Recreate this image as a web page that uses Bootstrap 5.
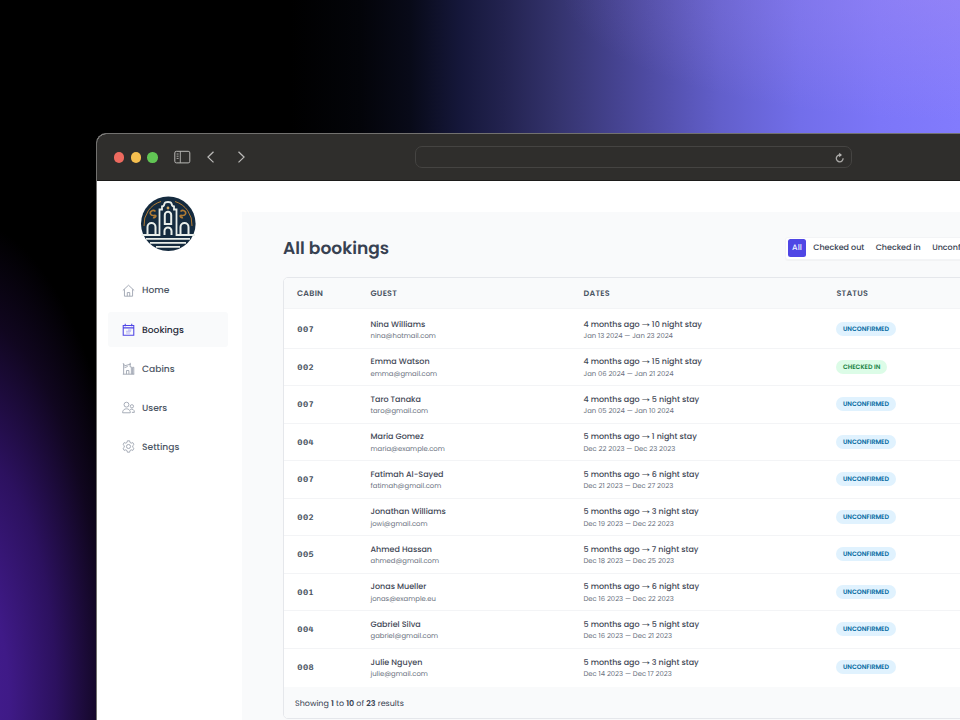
<!DOCTYPE html>
<html lang="en">
<head>
<meta charset="utf-8">
<meta name="viewport" content="width=device-width, initial-scale=1">
<title>All bookings</title>
<link href="https://cdn.jsdelivr.net/npm/bootstrap@5.3.0/dist/css/bootstrap.min.css" rel="stylesheet">
<style>
body{width:960px;height:720px;font-family:Poppins,Inter,"Liberation Sans",sans-serif;font-size:7.98px;line-height:1.5;color:#374151;text-rendering:geometricPrecision;
 padding:133px 0 0 96px;
 background:
 radial-gradient(ellipse 175px 480px at -35px 700px,#451d92 0%,#3f1a87 25%,#2c115f 52%,#10061f 80%,transparent 100%),
 radial-gradient(ellipse 400px 130px at 960px -10px,rgba(165,140,240,.45),transparent),
 linear-gradient(90deg,#000 0,#000 290px,#030409 360px,#080a18 410px,#15173a 460px,#232350 505px,#35346f 560px,#4c499e 640px,#625fcb 720px,#726eea 800px,#7c76f8 880px,#827bfd 960px)}
.win{width:900px;height:620px;border:1px solid #72716f;border-radius:10px 0 0 0}
.bar{height:47px;background:#2f2e2c;border-bottom:1px solid #1c1b1a;padding-left:17px}
.dot{width:10.4px;height:10.4px;border-radius:50%;margin:1px 6.3px 0 0}
.red{background:#ed6a5f}.amber{background:#f5bf4f}.green{background:#61c554}
.tools{margin-left:10px}
.url{width:437px;height:22px;border:1px solid #454442;border-radius:7px;padding-right:7px;margin-left:167px}
.side{width:145px;padding:15px 14px 0 11px}
.logo{margin-bottom:21px}
.side .nav-link{height:34.4px;margin-bottom:4.8px;padding:0 0 0 14px;color:#4b5563;font-size:9.15px;font-weight:500;border-radius:3px;gap:7px}
.side .nav-link span{padding-top:2.2px}
.side .nav-link.active{background:#f9fafb;color:#1f2937}
.ico{width:13px;height:13px;fill:none;stroke:#9ca3af;stroke-width:1.1}
.active .ico{stroke:#4f46e5}
.pane{background:#f9fafb;margin-top:31px;padding:24px 0 0 41px;overflow:hidden}
.head{width:773px}
h1{font-size:17.1px;font-weight:600;color:#374151;line-height:24px}
.filters{width:271.5px;height:23px;background:#fff;border:1px solid #f3f4f6;border-radius:3px;box-shadow:0 1px 1px rgba(0,0,0,.03);padding:2px;font-weight:500;gap:2.2px}
.filters span{white-space:nowrap;padding:.8px 4.6px 0;line-height:16.7px;border-radius:2.5px}
.filters .on{background:#4f46e5;color:#eef2ff}
.tbl{width:760px;border:1px solid #e5e7eb;border-radius:5px;margin-top:17px;background:#fff;overflow:hidden}
.line{display:grid;grid-template-columns:73.5px 213px 253px 150px;padding-left:13px;align-items:center;height:37.5px;border-bottom:1px solid #f3f4f6}
.line:last-child{border-bottom:0}
.thd{height:31px;background:#f9fafb;font-weight:600;color:#4b5563;letter-spacing:.23px;padding-top:1.2px}
.tbody2{padding:2px 0 1px}
.cab{font:600 9.15px Sono,"Liberation Mono",monospace;color:#4b5563;padding-top:1.4px}
.who{font-weight:500;line-height:12.6px;padding-top:2.3px;color:#3f4856}
.arr{font-family:"Noto Sans Math","DejaVu Sans",sans-serif;font-size:8px;line-height:1}
.sub2{color:#6b7280;font-size:6.85px;line-height:11px}
.pill{display:block;width:max-content;font-size:6.3px;font-weight:600;line-height:13px;padding:1px 6.9px 0;border-radius:50px;margin:0 0 0 -.5px}
.un{background:#e0f2fe;color:#0369a1}.ci{background:#dcfce7;color:#15803d}
.foot{height:31px;background:#f9fafb;padding:2px 0 0 11px}
.foot b{font-weight:600}
</style>
<script src="https://cdn.jsdelivr.net/npm/bootstrap@5.3.0/dist/js/bootstrap.bundle.min.js"></script>
</head>
<body class="overflow-hidden">
<div class="win overflow-hidden bg-white">
 <header class="bar d-flex align-items-center">
  <i class="dot red"></i><i class="dot amber"></i><i class="dot green"></i>
  <svg class="tools" width="74" height="16" viewBox="0 0 74 16" fill="none" stroke="#b9b8b6"><rect x=".8" y="2.3" width="15" height="11.6" rx="1.6"/><path d="M6.3 2.3v11.6M2.6 5h2M2.6 7.2h2M2.6 9.4h2" stroke-width=".9"/><path d="M39.500 2.800 34 8.100l5.500 5.300M64.500 2.800l5.500 5.300-5.500 5.300" stroke-width="1.300"/></svg>
  <div class="url d-flex align-items-center justify-content-end"><svg width="9" height="11" viewBox="0 0 9 11" fill="none" stroke="#a9a8a6" stroke-width="1.300"><path d="M4.800 3a3.400 3.400 0 1 0 3.300 3.300"/><path d="M4.200.700v4.500L7 3z" fill="#b9b8b6" stroke="none"/></svg></div>
 </header>
 <div class="d-flex h-100">
  <aside class="side flex-shrink-0">
   <div class="logo"><svg width="56" height="56" viewBox="0 0 56 56" class="d-block mx-auto"><circle cx="28.300" cy="27.700" r="27.300" fill="#152b3f"/><g fill="none" stroke="#b27c35" stroke-width="1"><path d="M4 30a24 24 0 0 1 17-24.500M35 5.500A24 24 0 0 1 52 30"/><path d="M15.500 15.500c-2.500-2.500-6 0-5 2.500s4 1 5 1.500-.5 3-2.500 2M40.500 15.500c2.500-2.500 6 0 5 2.500s-4 1-5 1.500.5 3 2.500 2" stroke-width="1.600"/></g><g fill="none" stroke="#e9eeea"><path d="M1.500 39h18V13.500h2.500v-3q2 0 2.500-3 .500-1.500 3.500-1.500t3.500 1.500q.500 3 2.500 3v3h2.500V39H55" stroke-width="1.800"/><path d="M24.800 28v-9a3.200 3.200 0 0 1 6.400 0v9zM24.500 39v-4a3.500 3.500 0 0 1 7 0v4M7.500 38v-7a4 4 0 0 1 8 0v7M40.500 38v-7a4 4 0 0 1 8 0v7" stroke-width="2"/><path d="M6 42.800h44M10 46.800h36M16 50.800h24" stroke-width="1.800"/></g><circle cx="28" cy="12" r="1.400" fill="#d0a45f"/></svg></div>
   <nav class="nav flex-column">
    <a class="nav-link d-flex align-items-center"><svg class="ico" viewBox="0 0 16 16"><path d="M1 8 8 1.500 15 8M3 6.500V15h10V6.500M6.500 15v-4.500h3V15"/></svg><span>Home</span></a>
    <a class="nav-link active d-flex align-items-center"><svg class="ico" viewBox="0 0 16 16"><path d="M1.500 3h13v12h-13zM1.500 6h13M4 1v3M12 1v3" stroke-width="1.300"/><path d="M5 12.200h5M5 10.200h6M7.500 8.500h4" stroke-width="1.300" opacity=".4"/></svg><span>Bookings</span></a>
    <a class="nav-link d-flex align-items-center"><svg class="ico" viewBox="0 0 16 16"><path d="M1 15h14M2 15V5m0-3v3l9-2.500M1 2l2 1M10 1v5h1.500v9M13 6.500h1.500V15M13 15V6.500M5.500 15v-4.500h3V15M3 7l4-1.500"/></svg><span>Cabins</span></a>
    <a class="nav-link d-flex align-items-center"><svg class="ico" viewBox="0 0 16 16"><circle cx="5.500" cy="4.500" r="3"/><circle cx="12.200" cy="6.500" r="2"/><path d="M.8 14.500c-.5-6.500 9.900-6.500 9.400 0zM10 10.500c2.500-1.200 5.500 0 5.200 3.500h-3"/></svg><span>Users</span></a>
    <a class="nav-link d-flex align-items-center"><svg class="ico" viewBox="0 0 16 16"><circle cx="8" cy="8" r="2.500"/><path d="m6.600 1-.4 2-1.500.9-2-.7L1.300 5.600 2.800 7v2l-1.500 1.400 1.400 2.400 2-.7 1.500.9.400 2h2.800l.4-2 1.500-.9 2 .7 1.400-2.400L13.200 9V7l1.500-1.400-1.400-2.400-2 .7-1.500-.9-.4-2z"/></svg><span>Settings</span></a>
   </nav>
  </aside>
  <main class="pane flex-grow-1">
   <div class="head d-flex justify-content-between align-items-center"><h1 class="m-0">All bookings</h1>
    <div class="filters d-flex align-items-center"><span class="on">All</span><span>Checked out</span><span>Checked in</span><span>Unconfirmed</span></div></div>
   <section class="tbl">
    <div class="line thd"><div>CABIN</div><div>GUEST</div><div>DATES</div><div>STATUS</div></div>
    <div class="tbody2" id="rows"></div>
    <div class="foot d-flex align-items-center"><span>Showing <b>1</b> to <b>10</b> of <b>23</b> results</span></div>
   </section>
  </main>
 </div>
</div>
<script>
const data=[
['007','Nina Williams','nina@hotmail.com','4 months ago → 10 night stay','Jan 13 2024 — Jan 23 2024'],
['002','Emma Watson','emma@gmail.com','4 months ago → 15 night stay','Jan 06 2024 — Jan 21 2024',1],
['007','Taro Tanaka','taro@gmail.com','4 months ago → 5 night stay','Jan 05 2024 — Jan 10 2024'],
['004','Maria Gomez','maria@example.com','5 months ago → 1 night stay','Dec 22 2023 — Dec 23 2023'],
['007','Fatimah Al-Sayed','fatimah@gmail.com','5 months ago → 6 night stay','Dec 21 2023 — Dec 27 2023'],
['002','Jonathan Williams','jowi@gmail.com','5 months ago → 3 night stay','Dec 19 2023 — Dec 22 2023'],
['005','Ahmed Hassan','ahmed@gmail.com','5 months ago → 7 night stay','Dec 18 2023 — Dec 25 2023'],
['001','Jonas Mueller','jonas@example.eu','5 months ago → 6 night stay','Dec 16 2023 — Dec 22 2023'],
['004','Gabriel Silva','gabriel@gmail.com','5 months ago → 5 night stay','Dec 16 2023 — Dec 21 2023'],
['008','Julie Nguyen','julie@gmail.com','5 months ago → 3 night stay','Dec 14 2023 — Dec 17 2023']];
document.getElementById('rows').innerHTML=data.map(r=>`<div class="line"><div class="cab">${r[0]}</div><div><div class="who">${r[1]}</div><div class="sub2">${r[2]}</div></div><div><div class="who">${r[3].replace('→','<span class="arr">→</span>')}</div><div class="sub2">${r[4]}</div></div><div><span class="pill ${r[5]?'ci':'un'}">${r[5]?'CHECKED IN':'UNCONFIRMED'}</span></div></div>`).join('');
</script>
</body>
</html>
